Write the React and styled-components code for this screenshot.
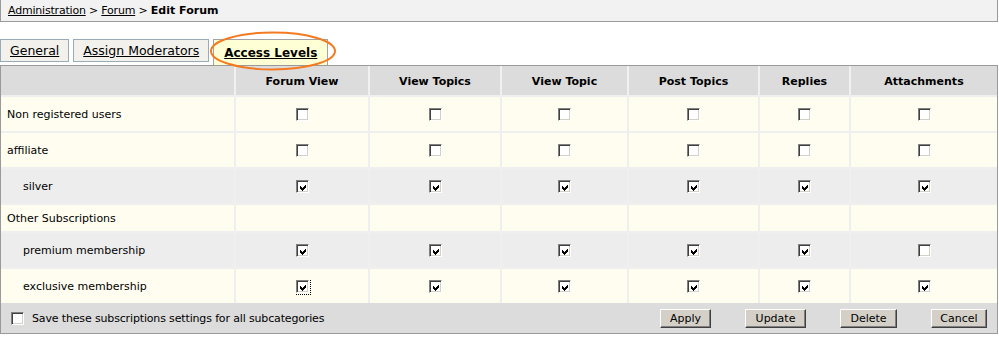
import React from "react";
import styled, { createGlobalStyle } from "styled-components";

const Global = createGlobalStyle`
  html, body { margin: 0; padding: 0; background: #fff; }
  body {
    font-family: "DejaVu Sans", Verdana, sans-serif;
    font-size: 11px;
    color: #000;
  }
`;

const Page = styled.div`
  width: 998px;
`;

const Breadcrumb = styled.div`
  height: 21px;
  line-height: 22px;
  background: #f2f2f2;
  border: 1px solid #9a9a9a;
  border-top: none;
  padding-left: 7px;
  font-size: 11px;
  letter-spacing: -0.2px;
  white-space: pre;
`;

const Crumb = styled.a`
  color: #000;
  text-decoration: underline;
`;

const Current = styled.b`
  font-weight: bold;
  letter-spacing: 0;
`;

const Tabs = styled.div`
  display: flex;
  align-items: flex-start;
  gap: 4px;
  margin-top: 17px;
  height: 26px;
`;

const Tab = styled.div`
  position: relative;
  box-sizing: border-box;
  height: ${(p) => (p.$active ? "26px" : "23px")};
  padding: ${(p) => (p.$active ? "3px 10px 0" : "0 9px")};
  line-height: 21px;
  border: 1px solid ${(p) => (p.$active ? "#a3a3a3" : "#9aabb8")};
  border-bottom: ${(p) => (p.$active ? "none" : undefined)};
  background: ${(p) => (p.$active ? "#ffffd6" : "#f3f1ec")};
  font-size: ${(p) => (p.$active ? "12px" : "12.5px")};
  font-weight: ${(p) => (p.$active ? "bold" : "normal")};
  text-decoration: underline;
  white-space: nowrap;
`;

const Highlight = styled.svg`
  position: absolute;
  left: -5px;
  top: -9px;
  width: 128px;
  height: 40px;
  pointer-events: none;
  overflow: visible;
`;

const Grid = styled.div`
  box-sizing: border-box;
  width: 998px;
  border: 1px solid #9a9a9a;
`;

const cols = "233px 134px 132px 127px 131px 91px 1fr";

const HeadRow = styled.div`
  display: grid;
  grid-template-columns: ${cols};
  height: 29px;
  background: #dcdcdc;
`;

const HeadCell = styled.div`
  display: flex;
  align-items: center;
  justify-content: center;
  padding-top: 1px;
  font-weight: bold;
  font-size: 11px;
  border-left: ${(p) => (p.$first ? "none" : "2px solid #f1f1f1")};
`;

const Row = styled.div`
  display: grid;
  grid-template-columns: ${cols};
  box-sizing: border-box;
  height: ${(p) => (p.$short ? "28px" : "36px")};
  border-top: 2px solid #efefef;
  background: ${(p) => (p.$gray ? "#ededed" : "#fffdf0")};
`;

const NameCell = styled.div`
  display: flex;
  align-items: center;
  padding-left: ${(p) => (p.$indent ? "22px" : "6px")};
  white-space: nowrap;
`;

const BoxCell = styled.div`
  display: flex;
  align-items: center;
  justify-content: center;
  border-left: 2px solid #efefef;
`;

const Box = styled.span`
  position: relative;
  display: inline-block;
  box-sizing: border-box;
  width: 13px;
  height: 13px;
  background: #fff;
  border-top: 1px solid #808080;
  border-left: 1px solid #808080;
  border-right: 1px solid #ffffff;
  border-bottom: 1px solid #ffffff;
  box-shadow: inset 1px 1px 0 #404040, inset -1px -1px 0 #d4d0c8;

  svg {
    position: absolute;
    left: 1px;
    top: 1px;
    width: 11px;
    height: 11px;
  }

  &::after {
    content: "";
    display: ${(p) => (p.$focus ? "block" : "none")};
    position: absolute;
    right: -3px;
    bottom: -3px;
    width: 14px;
    height: 14px;
    border-right: 1px dotted #000;
    border-bottom: 1px dotted #000;
  }
`;

const Check = ({ checked, focus }) => (
  <Box $focus={focus}>
    {checked && (
      <svg viewBox="0 0 11 11" shapeRendering="crispEdges">
        <path d="M2 4 L4 6 L8 2 L8 5 L4 9 L2 7 Z" fill="#000" />
      </svg>
    )}
  </Box>
);

const Footer = styled.div`
  display: flex;
  align-items: center;
  height: 30px;
  background: #dcdcdc;
  padding: 0 10px 0 10px;
`;

const SaveLabel = styled.label`
  display: flex;
  align-items: center;
  gap: 8px;
  white-space: nowrap;
  letter-spacing: -0.15px;
`;

const Buttons = styled.div`
  margin-left: auto;
  display: flex;
  gap: 34px;
`;

const Button = styled.button`
  box-sizing: border-box;
  width: ${(p) => p.$w}px;
  height: 19px;
  padding: 0;
  font-family: "DejaVu Sans", Verdana, sans-serif;
  font-size: 11px;
  color: #000;
  background: #d4d0c8;
  border: 1px solid;
  border-color: #ffffff #404040 #404040 #ffffff;
  box-shadow: inset -1px -1px 0 #808080;
  border-radius: 0;
`;

const columns = ["Forum View", "View Topics", "View Topic", "Post Topics", "Replies", "Attachments"];

const rows = [
  { name: "Non registered users", checks: [0, 0, 0, 0, 0, 0] },
  { name: "affiliate", checks: [0, 0, 0, 0, 0, 0] },
  { name: "silver", indent: true, gray: true, checks: [1, 1, 1, 1, 1, 1] },
  { name: "Other Subscriptions", short: true, checks: null },
  { name: "premium membership", indent: true, gray: true, checks: [1, 1, 1, 1, 1, 0] },
  { name: "exclusive membership", indent: true, checks: [1, 1, 1, 1, 1, 1], focus: 0 },
];

export default function App() {
  return (
    <Page>
      <Global />
      <Breadcrumb>
        <Crumb href="#">Administration</Crumb>{" > "}
        <Crumb href="#">Forum</Crumb>{" > "}
        <Current>Edit Forum</Current>
      </Breadcrumb>
      <Tabs>
        <Tab>General</Tab>
        <Tab>Assign Moderators</Tab>
        <Tab $active>
          Access Levels
          <Highlight viewBox="0 0 128 40">
            <ellipse cx="64" cy="20" rx="62" ry="18.5" fill="none" stroke="#f47a22" strokeWidth="2" />
          </Highlight>
        </Tab>
      </Tabs>
      <Grid>
        <HeadRow>
          <HeadCell $first />
          {columns.map((c) => (
            <HeadCell key={c}>{c}</HeadCell>
          ))}
        </HeadRow>
        {rows.map((r) => (
          <Row key={r.name} $gray={r.gray} $short={r.short}>
            <NameCell $indent={r.indent}>{r.name}</NameCell>
            {columns.map((c, i) => (
              <BoxCell key={c}>
                {r.checks && <Check checked={!!r.checks[i]} focus={r.focus === i} />}
              </BoxCell>
            ))}
          </Row>
        ))}
        <Footer>
          <SaveLabel>
            <Check />
            Save these subscriptions settings for all subcategories
          </SaveLabel>
          <Buttons>
            <Button $w={51}>Apply</Button>
            <Button $w={61}>Update</Button>
            <Button $w={57}>Delete</Button>
            <Button $w={56}>Cancel</Button>
          </Buttons>
        </Footer>
      </Grid>
    </Page>
  );
}
